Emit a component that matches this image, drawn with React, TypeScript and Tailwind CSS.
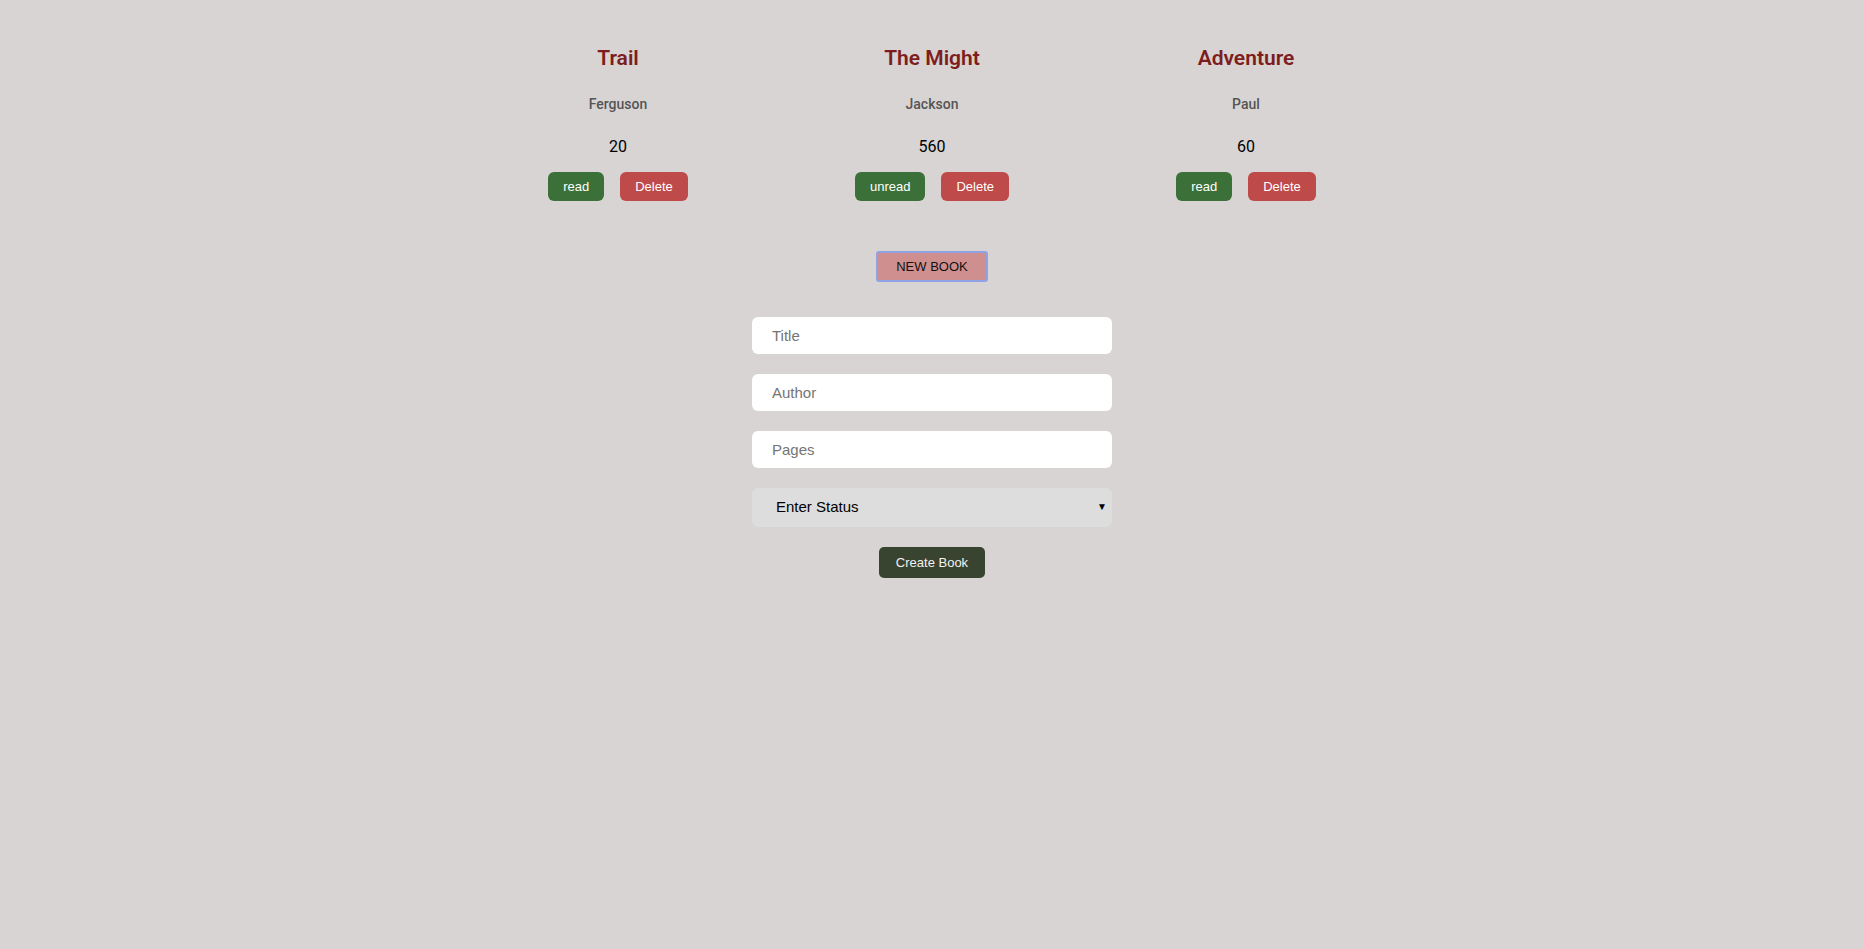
import React from 'react';

type Book = { title: string; author: string; pages: number; read: boolean };

const books: Book[] = [
  { title: 'Trail', author: 'Ferguson', pages: 20, read: true },
  { title: 'The Might', author: 'Jackson', pages: 560, read: false },
  { title: 'Adventure', author: 'Paul', pages: 60, read: true },
];

const BookCard: React.FC<{ book: Book }> = ({ book }) => (
  <div className="w-[314px] flex flex-col items-center font-['Roboto',sans-serif]">
    <h2 className="text-[21px] leading-[26px] font-semibold text-[#7e1d1d]">{book.title}</h2>
    <p className="mt-[24px] text-[14px] leading-[18px] font-medium text-[#555555]">{book.author}</p>
    <p className="mt-[24px] text-[16px] leading-[20px] text-black">{book.pages}</p>
    <div className="mt-[15px] flex gap-[16px] font-['Liberation_Sans',Arial,sans-serif] text-[13px]">
      <button className="h-[29px] px-[15px] rounded-[6px] bg-[#3b7139] text-white">
        {book.read ? 'read' : 'unread'}
      </button>
      <button className="h-[29px] px-[15px] rounded-[6px] bg-[#bf4a4a] text-white">Delete</button>
    </div>
  </div>
);

export default function App() {
  return (
    <div className="min-h-screen w-full bg-[#d8d4d3] flex flex-col items-center pt-[45px] font-['Liberation_Sans',Arial,sans-serif]">
      {/* Library */}
      <div className="flex justify-center">
        {books.map((b) => (
          <BookCard key={b.title} book={b} />
        ))}
      </div>

      <button className="mt-[50px] h-[31px] px-[18px] rounded-[3px] border-2 border-[#8fa2e6] bg-[#d08f8f] text-[13px] text-[#111]">
        NEW BOOK
      </button>

      {/* Form */}
      <form className="mt-[35px] w-[360px] flex flex-col items-center gap-[20px]">
        <input
          placeholder="Title"
          className="w-full h-[37px] rounded-[6px] bg-white pl-[20px] text-[15px] placeholder:text-[#757575] outline-none"
        />
        <input
          placeholder="Author"
          className="w-full h-[37px] rounded-[6px] bg-white pl-[20px] text-[15px] placeholder:text-[#757575] outline-none"
        />
        <input
          placeholder="Pages"
          className="w-full h-[37px] rounded-[6px] bg-white pl-[20px] text-[15px] placeholder:text-[#757575] outline-none"
        />
        <div className="relative w-full">
          <select className="w-full h-[39px] appearance-none rounded-[6px] bg-[#dddddd] pl-[24px] text-[15px] text-black outline-none">
            <option>Enter Status</option>
            <option>read</option>
            <option>unread</option>
          </select>
          <span className="absolute right-[5px] top-[11px] text-[10px] text-black pointer-events-none">▼</span>
        </div>
        <button type="button" className="h-[31px] px-[17px] rounded-[5px] bg-[#394430] text-[13px] text-[#f2f2f2]">
          Create Book
        </button>
      </form>
    </div>
  );
}
